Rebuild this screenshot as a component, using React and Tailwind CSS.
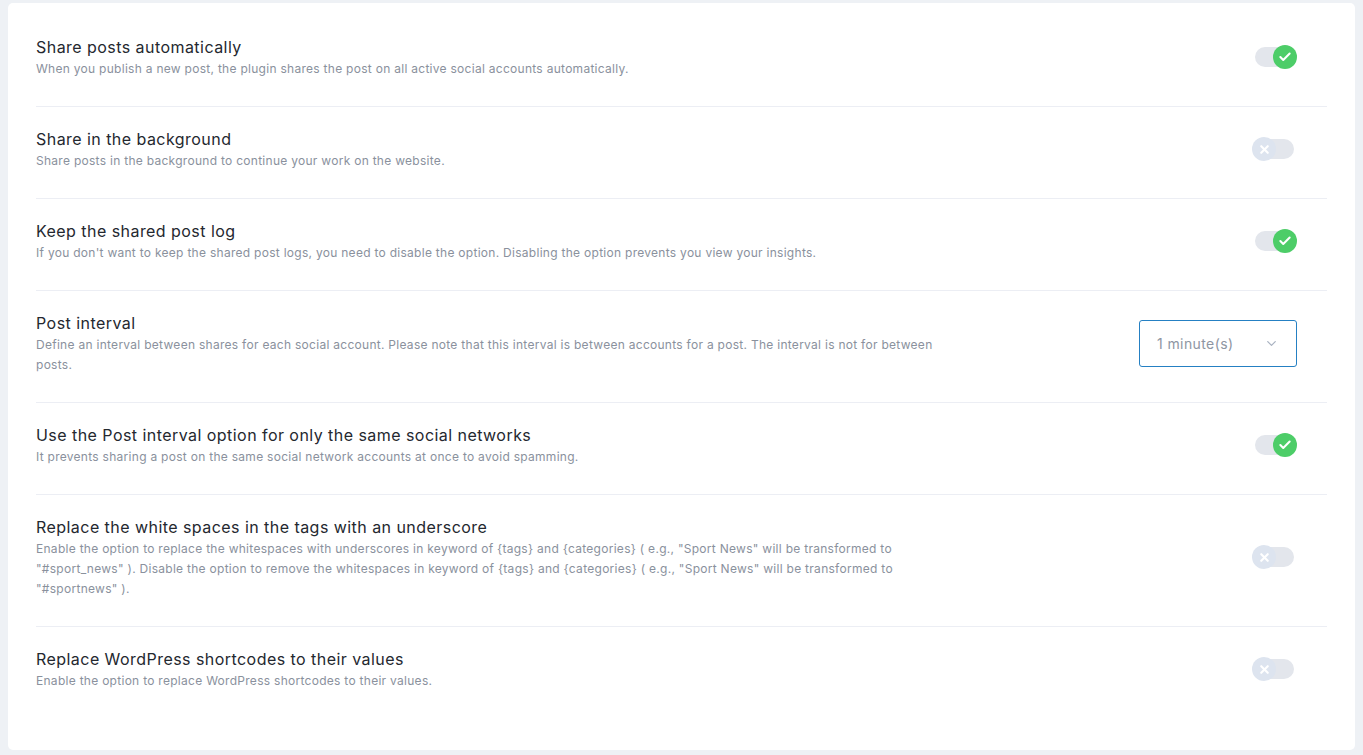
import { Check, X, ChevronDown } from 'lucide-react'

const ROWS = [
  {
    title: 'Share posts automatically',
    desc: ['When you publish a new post, the plugin shares the post on all active social accounts automatically.'],
    type: 'toggle', on: true,
  },
  {
    title: 'Share in the background',
    desc: ['Share posts in the background to continue your work on the website.'],
    type: 'toggle', on: false,
  },
  {
    title: 'Keep the shared post log',
    desc: ["If you don't want to keep the shared post logs, you need to disable the option. Disabling the option prevents you view your insights."],
    type: 'toggle', on: true,
  },
  {
    title: 'Post interval',
    desc: [
      'Define an interval between shares for each social account. Please note that this interval is between accounts for a post. The interval is not for between',
      'posts.',
    ],
    type: 'select',
  },
  {
    title: 'Use the Post interval option for only the same social networks',
    desc: ['It prevents sharing a post on the same social network accounts at once to avoid spamming.'],
    type: 'toggle', on: true,
  },
  {
    title: 'Replace the white spaces in the tags with an underscore',
    desc: [
      'Enable the option to replace the whitespaces with underscores in keyword of {tags} and {categories} ( e.g., "Sport News" will be transformed to',
      '"#sport_news" ). Disable the option to remove the whitespaces in keyword of {tags} and {categories} ( e.g., "Sport News" will be transformed to',
      '"#sportnews" ).',
    ],
    type: 'toggle', on: false,
  },
  {
    title: 'Replace WordPress shortcodes to their values',
    desc: ['Enable the option to replace WordPress shortcodes to their values.'],
    type: 'toggle', on: false,
  },
]

function Toggle({ on }) {
  return (
    <div className="relative w-[45px] h-6">
      <div className="absolute left-[3px] right-[3px] top-[2px] h-5 rounded-full bg-[#e3e6ec]" />
      {on ? (
        <div className="absolute right-0 top-0 w-6 h-6 rounded-full bg-[#4dcd68] flex items-center justify-center">
          <Check size={14} strokeWidth={3.5} className="text-white" />
        </div>
      ) : (
        <div className="absolute left-0 top-0 w-6 h-6 rounded-full bg-[#dde4ef] flex items-center justify-center">
          <X size={13} strokeWidth={4} className="text-white" />
        </div>
      )}
    </div>
  )
}

function Select() {
  return (
    <div className="w-[158px] h-[47px] border border-[#2580c3] rounded-[3px] flex items-center justify-between pl-[17px] pr-[17px]">
      <span className="text-[14px] tracking-[0.4px] text-[#8e96a3]">1 minute(s)</span>
      <ChevronDown size={15} strokeWidth={2} className="text-[#a9b2c1]" />
    </div>
  )
}

export default function App() {
  return (
    <div className="min-h-screen bg-[#eef1f5] px-2 pt-[3px] pb-[6px]" style={{ fontFamily: 'Inter, "Open Sans", sans-serif' }}>
      <div className="bg-white rounded-[5px] px-7 pt-3 pb-[31px]">
        {ROWS.map((r, i) => (
          <div key={i}
            className={`flex items-center justify-between pt-5 ${i < ROWS.length - 1 ? 'pb-[27px] border-b border-[#eceef4]' : 'pb-7'}`}>
            <div className="min-w-0">
              <div className="text-[16px] leading-6 tracking-[0.45px] text-[#24282f]">{r.title}</div>
              <div className="text-[12px] leading-5 tracking-[0.28px] text-[#8a919d]">
                {r.desc.map((d, j) => <div key={j} className="whitespace-nowrap">{d}</div>)}
              </div>
            </div>
            <div className="mr-[30px] shrink-0">
              {r.type === 'select' ? <Select /> : <Toggle on={r.on} />}
            </div>
          </div>
        ))}
      </div>
    </div>
  )
}
